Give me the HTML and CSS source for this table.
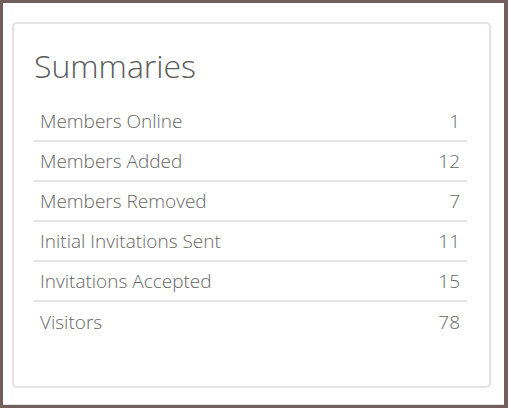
FILE: index.html
```html
<!DOCTYPE html>
<html>
<head>
<meta charset="utf-8">
<link rel="stylesheet" href="styles.css">
</head>
<body>
<div class="page">
  <section class="card">
    <h1 class="title">Summaries</h1>
    <ul class="list">
      <li class="row"><span>Members Online</span><span>1</span></li>
      <li class="row"><span>Members Added</span><span>12</span></li>
      <li class="row"><span>Members Removed</span><span>7</span></li>
      <li class="row"><span>Initial Invitations Sent</span><span>11</span></li>
      <li class="row"><span>Invitations Accepted</span><span>15</span></li>
      <li class="row"><span>Visitors</span><span>78</span></li>
    </ul>
  </section>
</div>
</body>
</html>
```

FILE: styles.css
```css
html {
  background: #725f5b;
  height: 100%;
}
body {
  margin: 0;
  padding: 3px 4px 3px 3px;
  height: 100%;
  box-sizing: border-box;
  font-family: "Open Sans", sans-serif;
}
.page {
  background: #fff;
  height: 100%;
  box-sizing: border-box;
  padding: 19px 13px 0 9px;
  border-bottom: 1px solid #e4e4e4;
}
.card {
  border: 2px solid #e3e3e3;
  border-radius: 5px;
  height: 366px;
  box-sizing: border-box;
  padding: 0 22px 0 20px;
}
.title {
  margin: 0;
  padding-top: 22px;
  font-size: 32px;
  font-weight: 300;
  color: #5a5a5a;
  line-height: 40px;
  height: 78px;
  box-sizing: border-box;
}
.list {
  list-style: none;
  margin: 0;
  padding: 0;
}
.row {
  display: flex;
  justify-content: space-between;
  height: 40px;
  box-sizing: border-box;
  padding: 0 7px 0 6px;
  align-items: center;
  font-size: 19px;
  font-weight: 300;
  color: #666;
  border-bottom: 2px solid #e3e3e3;
}
.row:last-child {
  border-bottom: none;
}
```
